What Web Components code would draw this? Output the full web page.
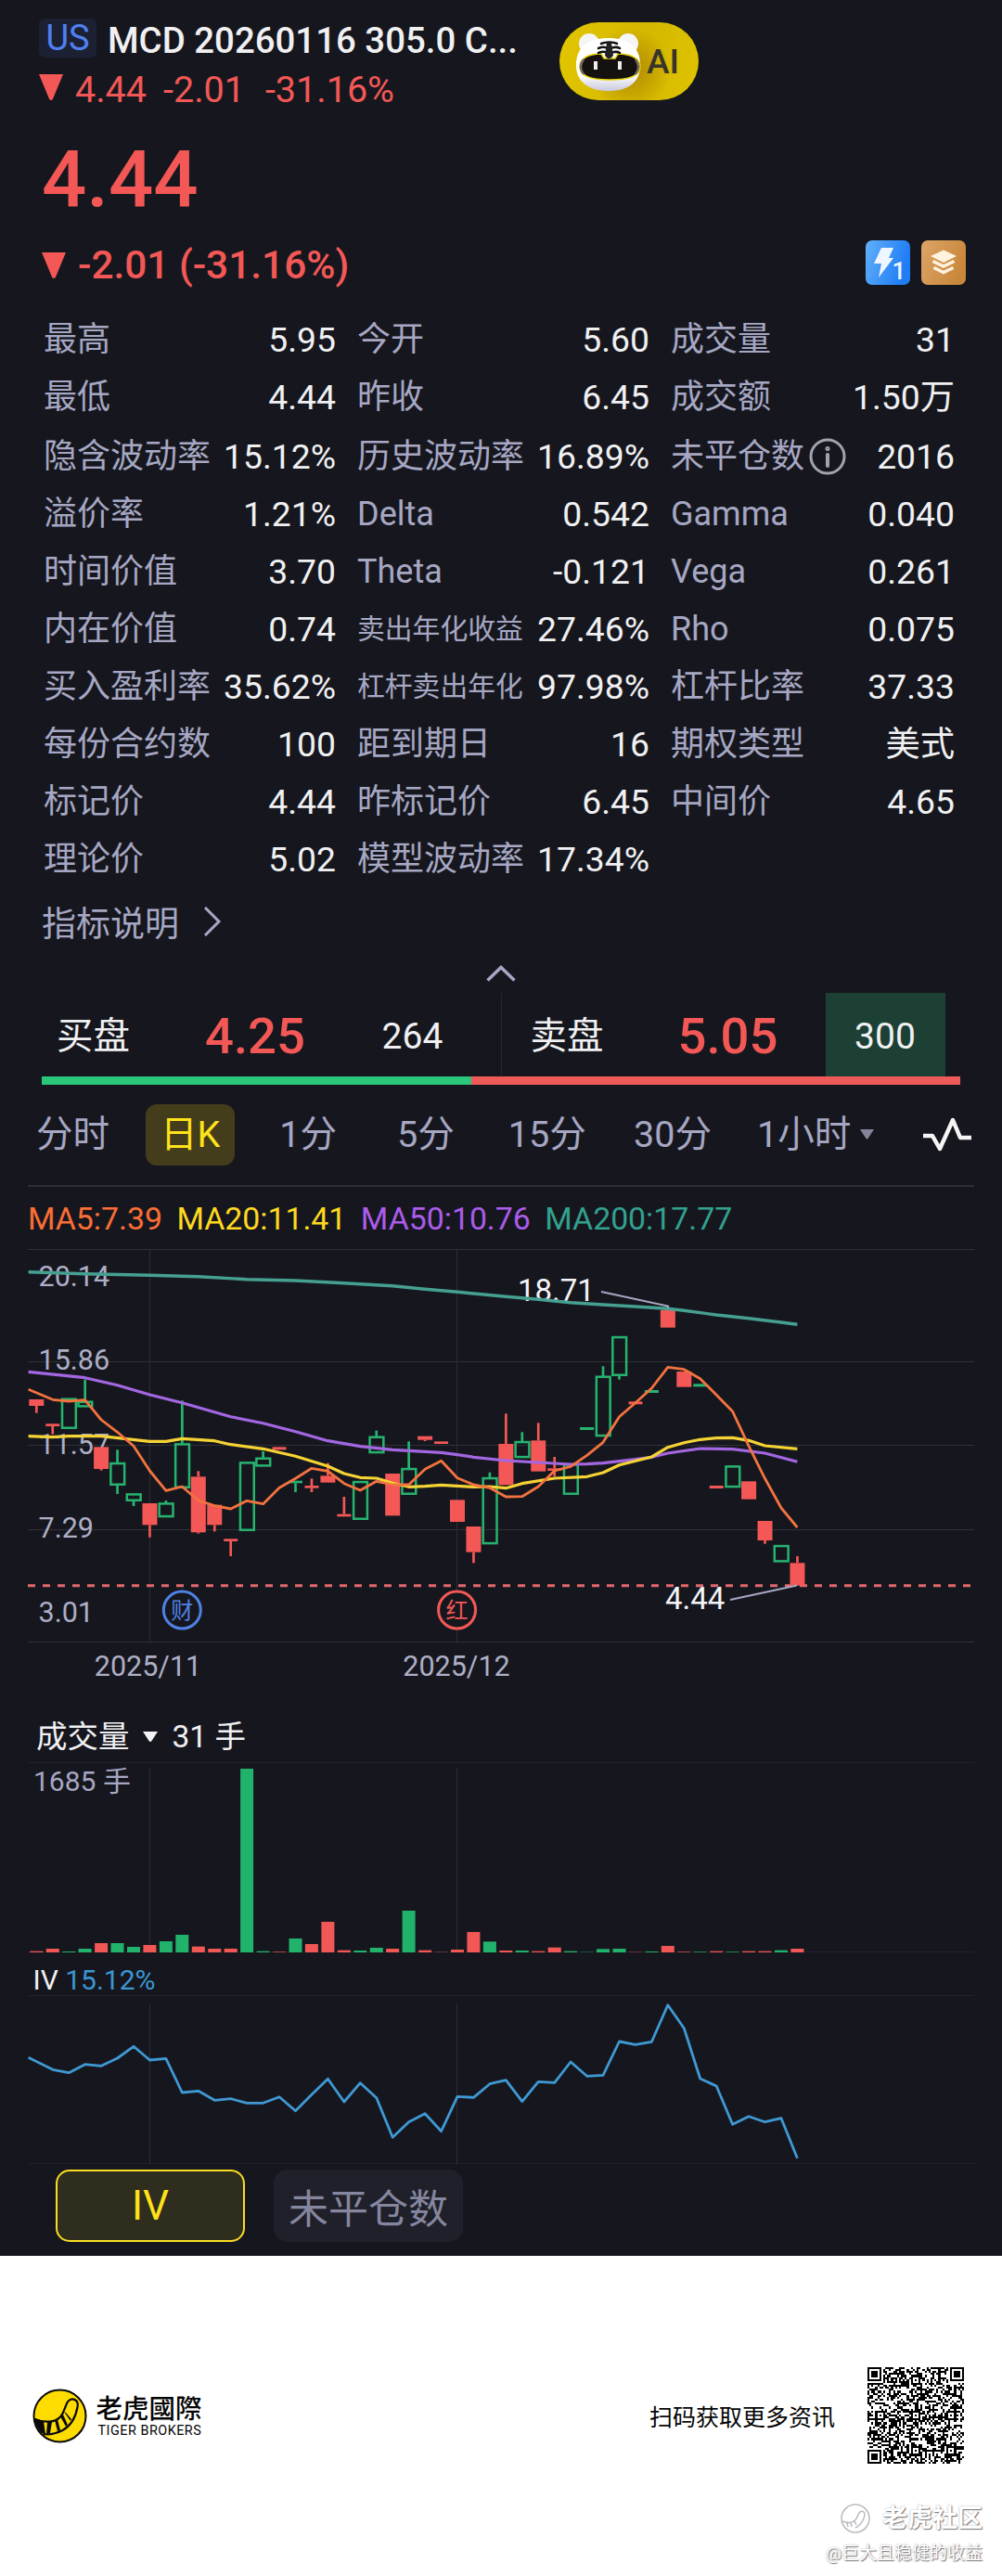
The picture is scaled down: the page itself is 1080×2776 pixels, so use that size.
<!DOCTYPE html>
<html lang="zh-CN">
<head>
<meta charset="utf-8">
<title>MCD 20260116 305.0 CALL</title>
<style>
  html, body { margin: 0; padding: 0; background: #fff; }
  body {
    width: 1080px;
    font-family: Roboto, "Noto Sans CJK SC", sans-serif;
    --muted: #a6a7c3;
    --red: #f35856;
    --yellow: #ffe21a;
  }
  main { display: flex; flex-direction: column; height: 2431px; background: #16171e; color: #f0f0f2; }
</style>
</head>
<body>
<main>
  <quote-header>
    <span slot="market">US</span>
    <span slot="title">MCD 20260116 305.0 C...</span>
  </quote-header>
  <quote-price></quote-price>
  <stat-grid></stat-grid>
  <order-depth></order-depth>
  <period-tabs></period-tabs>
  <kline-chart></kline-chart>
  <volume-chart></volume-chart>
  <iv-chart></iv-chart>
  <indicator-switch>
    <indicator-button active>IV</indicator-button>
    <indicator-button>未平仓数</indicator-button>
  </indicator-switch>
</main>
<brand-footer></brand-footer>

<script>
const RED = '#f35856'
const GREEN = '#26b36f'

class BaseElement extends HTMLElement {
  connectedCallback() {
    if (this.shadowRoot) return
    this.attachShadow({mode: 'open'})
    this.shadowRoot.innerHTML = this.render()
  }
}

class QuoteHeader extends BaseElement {
  render() {
    return `
      <style>
      :host { display: flex; height: 130px; box-sizing: border-box; padding: 20px 0 0 42px; }
      .info { width: 561px; }
      .top { display: flex; height: 42px; line-height: 48px; font-size: 38.4px; font-weight: 500; white-space: nowrap; }
      .market {
        width: 62px; height: 42px; line-height: 42px; margin-right: 12px; border-radius: 6px;
        background: #1b2133; color: #4f80f2; font-size: 38px; font-weight: 400; text-align: center;
      }
      .change { display: flex; align-items: center; height: 48px; margin-top: 11px; color: var(--red); font-size: 39.5px; line-height: 48px; white-space: pre; }
      .change svg { margin-right: 13px; }
      .change span { margin-right: 18px; }
      .ai {
        display: flex; align-items: center; width: 150px; height: 84px; margin-top: 4px; border-radius: 42px;
        background: radial-gradient(circle at 76px 50px, #b89300 10px, rgba(190, 155, 0, 0) 44px), linear-gradient(100deg, #e2c600 0%, #d4b700 60%, #dfc400 100%);
      }
      .ai b { margin-left: 6px; font-size: 37px; font-weight: 500; color: #37342a; }
      </style>
      <div class="info">
        <div class="top"><div class="market"><slot name="market"></slot></div><slot name="title"></slot></div>
        <div class="change">
          <svg width="26" height="28" style="margin-top:-7px"><path d="M0 0h26L15 26.500q-2 3-4 0z" fill="${RED}"/></svg><span>4.44</span><span style="margin-right:22px">-2.01</span><span>-31.16%</span>
        </div>
      </div>
      <div class="ai">
        <svg width="88" height="84" viewBox="0 0 88 84">
          <defs>
            <linearGradient id="face" x1="0" y1="0" x2="0" y2="1">
              <stop offset=".7" stop-color="#fff"/><stop offset="1" stop-color="#c9c9de"/>
            </linearGradient>
          </defs>
          <circle cx="32" cy="23" r="11" fill="#f5f5f5"/><circle cx="74" cy="23" r="11" fill="#f5f5f5"/>
          <path d="M53 17c21 0 33 9 34 27 1 20-12 30-34 30S17 64 18 44c1-18 13-27 35-27z" fill="url(#face)"/>
          <path d="M22 48c0-9 9-14 23-14l3 5h12l3-5c14 0 24 5 24 14 0 10-14 14-33 14s-32-4-32-14z" fill="#15110f" stroke="#e8d400" stroke-width="1.500"/>
          <path d="M26 40c-4 5-4 11 0 16M82 40c4 5 4 11 0 16" fill="none" stroke="#766b6b" stroke-width="2.500"/>
          <path d="M45 23c5-2 13-2 17 0M42 28c5-2 9-1 11 1 3-2 9-3 12-1M42 33c5-2 9-1 11 1 3-2 9-3 12-1" fill="none" stroke="#111" stroke-width="2.600" stroke-linecap="round"/>
          <path d="M51 22h5l2 14-3 3h-3l-3-3z" fill="#222"/>
          <path d="M37 42h4v9h-4zM63 42h4v9h-4z" fill="#eee"/>
        </svg>
        <b>AI</b>
      </div>
    `
  }
}

class QuotePrice extends BaseElement {
  render() {
    return `
      <style>
      :host { display: block; height: 204px; padding: 0 39px 0 45px; color: var(--red); font-weight: 500; }
      .price { height: 126px; line-height: 128px; font-size: 85px; }
      .row { display: flex; align-items: center; height: 60px; }
      .change { flex: 1; font-size: 42.4px; line-height: 60px; margin-left: 13px; }
      .icons { display: flex; gap: 12px; margin-top: -6px; }
      text { font: 500 26px Roboto, sans-serif; }
      </style>
      <div class="price">4.44</div>
      <div class="row">
        <svg width="26" height="28"><path d="M0 0h26L15 26.500q-2 3-4 0z" fill="${RED}"/></svg>
        <span class="change">-2.01 (-31.16%)</span>
        <div class="icons">
          <svg width="48" height="48">
            <defs><linearGradient id="blue" x2="1" y2=".3"><stop stop-color="#62b0fa"/><stop offset="1" stop-color="#1f7df5"/></linearGradient></defs>
            <rect width="48" height="48" rx="7" fill="url(#blue)"/>
            <path d="M17 8h13l-5 11h5L14 40l3-15H9z" fill="#eef6ff"/>
            <text x="28.500" y="42" fill="#eef6ff">1</text>
          </svg>
          <svg width="48" height="48">
            <defs><linearGradient id="gold" x2="1" y2=".4"><stop stop-color="#dea468"/><stop offset="1" stop-color="#c8883c"/></linearGradient></defs>
            <rect width="48" height="48" rx="7" fill="url(#gold)"/>
            <path d="M24 10.500L38 17l-14 7-14-7z" fill="#fff3df"/>
            <path d="M12.500 22.500L24 28l11.500-5.500M13.500 29.500L24 34.500l10.500-5" fill="none" stroke="#fff3df" stroke-width="3.500"/>
          </svg>
        </div>
      </div>
    `
  }
}

const STATS = [
  ['最高', '5.95'], ['今开', '5.60'], ['成交量', '31'],
  ['最低', '4.44'], ['昨收', '6.45'], ['成交额', '1.50万'],
  ['隐含波动率', '15.12%'], ['历史波动率', '16.89%'], ['未平仓数', '2016'],
  ['溢价率', '1.21%'], ['Delta', '0.542'], ['Gamma', '0.040'],
  ['时间价值', '3.70'], ['Theta', '-0.121'], ['Vega', '0.261'],
  ['内在价值', '0.74'], ['卖出年化收益', '27.46%'], ['Rho', '0.075'],
  ['买入盈利率', '35.62%'], ['杠杆卖出年化', '97.98%'], ['杠杆比率', '37.33'],
  ['每份合约数', '100'], ['距到期日', '16'], ['期权类型', '美式'],
  ['标记价', '4.44'], ['昨标记价', '6.45'], ['中间价', '4.65'],
  ['理论价', '5.02'], ['模型波动率', '17.34%']
]

class StatItem extends BaseElement {
  render() {
    const label = this.getAttribute('label')
    const info = this.hasAttribute('info')
      ? `<svg width="40" height="40" viewBox="0 0 40 40" fill="none" stroke="#a3a3ae" stroke-width="3"><circle cx="20" cy="20" r="18"/><path d="M20 18v12" stroke-width="4" stroke-linecap="round"/><circle cx="20" cy="11.500" r="1"/></svg>`
      : ''
    return `
      <style>
      :host { display: flex; align-items: center; line-height: 62px; white-space: nowrap; }
      .label { color: var(--muted); font-size: ${label.length > 5 ? 29.8 : 36}px; }
      svg { margin-left: 5px; }
      .value { margin-left: auto; font-size: 37.3px; }
      </style>
      <span class="label">${label}</span>${info}
      <span class="value"><slot></slot></span>
    `
  }
}

class StatGrid extends BaseElement {
  render() {
    return `
      <style>
      :host { display: block; height: 692px; }
      .grid { display: grid; grid-template-columns: 315px 315px 306px; grid-template-rows: 62px 62px 64px repeat(7, 62px); column-gap: 23px; padding: 1px 0 0 47px; }
      stat-item:nth-child(n+7):nth-child(-n+9) { padding-top: 2px; }
      .more { display: flex; align-items: center; height: 72px; padding-left: 45px; color: var(--muted); font-size: 37px; }
      .more svg { margin-left: 26px; }
      </style>
      <div class="grid">
        ${STATS.map(([label, value]) => `<stat-item label="${label}" ${label === '未平仓数' ? 'info' : ''}>${value}</stat-item>`).join('')}
      </div>
      <div class="more">指标说明<svg width="20" height="32" viewBox="0 0 20 32" fill="none" stroke="#a6a7c3" stroke-width="3"><path d="M2 1l15 15L2 31"/></svg></div>
    `
  }
}

class OrderDepth extends BaseElement {
  render() {
    return `
      <style>
      :host { display: block; height: 143px; padding: 0 45px; }
      .up { display: block; margin: 0 auto; padding-top: 14px; }
      .book { display: flex; height: 90px; margin-top: 12px; line-height: 94px; }
      .side { display: flex; flex: 1; box-sizing: border-box; }
      .side + .side { border-left: 1px solid #26272d; }
      .side span { flex-shrink: 0; }
      .name { width: 160px; padding-left: 16px; font-size: 39.5px; }
      .price { width: 175px; color: var(--red); font-size: 54.500px; font-weight: 500; line-height: 93px; }
      .size { width: 129px; margin-left: -16px; text-align: center; font-size: 39px; }
      .ask .name { width: 159px; padding-left: 31px; }
      .ask .size { background: #1c4034; }
      .bar { display: flex; height: 9px; }
      .bar i:first-child { width: 463px; background: #2ac67c; }
      .bar i:last-child { flex: 1; background: #ee5a58; }
      </style>
      <svg class="up" width="34" height="18" viewBox="0 0 34 18" fill="none" stroke="#a6a7c3" stroke-width="3.500"><path d="M2.500 16.500L17 2.500l14.500 14"/></svg>
      <div class="book">
        <div class="side"><span class="name">买盘</span><span class="price">4.25</span><span class="size">264</span></div>
        <div class="side ask"><span class="name">卖盘</span><span class="price">5.05</span><span class="size">300</span></div>
      </div>
      <div class="bar"><i></i><i></i></div>
    `
  }
}

class PeriodTabs extends BaseElement {
  render() {
    return `
      <style>
      :host { display: block; height: 110px; padding: 0 30px; }
      nav { display: flex; align-items: center; height: 110px; padding-left: 9px; box-sizing: border-box; border-bottom: 2px solid #2e2f34; color: var(--muted); font-size: 39.6px; line-height: 66px; }
      span { flex-shrink: 0; white-space: nowrap; }
      svg { flex-shrink: 0; }
      .on { width: 96px; border-radius: 12px; background: #443d1b; color: var(--yellow); text-align: center; }
      </style>
      <nav>
        <span style="margin-right:39px">分时</span>
        <span class="on" style="margin-right:48px">日K</span>
        <span style="margin-right:65px">1分</span>
        <span style="margin-right:58px">5分</span>
        <span style="margin-right:51px">15分</span>
        <span style="margin-right:49px">30分</span>
        <span style="margin-right:9px">1小时</span>
        <svg width="17" height="12"><path d="M1 0h15l-6.500 10q-1 1-2 0z" fill="#84859d"/></svg>
        <svg width="54" height="40" viewBox="0 0 54 40" style="margin-left:51px" fill="none" stroke="#f5f5f5" stroke-width="4.500" stroke-linejoin="round"><path d="M1 21h10l8 14L33 4l8 19h12"/></svg>
      </nav>
    `
  }
}

const STEP = 17.45
const FIRST_X = 39.3
const xAt = i => FIRST_X + STEP * i
const monthLines = (top, bottom) =>
  [161.5, 492.5].map(x => `<path d="M${x} ${top}V${bottom}" stroke="#2d2e33"/>`).join('')

// [index, y] pairs, y in thirds of a pixel
function polyline(points, color, width) {
  const d = points.map(([i, y]) => `${xAt(i).toFixed(1)},${(y / 3).toFixed(1)}`).join(' ')
  return `<polyline points="${d}" fill="none" stroke="${color}" stroke-width="${width}" stroke-linejoin="round"/>`
}

// direction, body top, body bottom, high, low
const CANDLES = [
  ['r', 534, 555, 534, 578], ['r', 613, 621, 615, 647], ['g', 532, 628], ['g', 541, 558, 470, 558],
  ['r', 688, 759, 688, 764], ['g', 740, 811, 697, 840], ['g', 840, 862, 840, 879], ['r', 870, 940, 870, 980],
  ['g', 870, 914, 861, 914], ['g', 678, 820, 538, 820], ['r', 784, 964, 766, 968], ['r', 875, 940, 875, 961],
  ['r', 985, 993, 986, 1041], ['g', 738, 958], ['g', 724, 750, 702, 750], ['r', 688, 697],
  ['g', 797, 805, 797, 834], ['r', 813, 821, 790, 834], ['r', 781, 803, 740, 803], ['r', 905, 913, 849, 912],
  ['g', 800, 922], ['g', 655, 707, 635, 707], ['r', 774, 910], ['g', 758, 841, 670, 841],
  ['r', 653, 665, 653, 669], ['r', 670, 678], ['r', 859, 930], ['r', 945, 1028, 945, 1063],
  ['g', 788, 1001, 770, 1001], ['r', 678, 811, 580, 811], ['g', 671, 722, 640, 722], ['r', 667, 767, 610, 767],
  ['r', 757, 765, 720, 783], ['g', 744, 841], ['g', 624, 633], ['g', 460, 653, 427, 653],
  ['g', 332, 457, 332, 470], ['r', 541, 550], ['g', 504, 513], ['r', 245, 302, 233, 302],
  ['r', 444, 494], ['g', 484, 493], ['r', 813, 822], ['g', 750, 818],
  ['r', 799, 857], ['r', 927, 990, 927, 1001], ['g', 1007, 1059], ['r', 1063, 1136, 1041, 1136]
]

const MA5 = [502, 535, 540, 536, 600, 640, 685, 765, 829, 816, 861, 878, 888, 862, 872, 820, 790, 757, 766, 806, 828, 799, 810, 810, 760, 733, 788, 810, 820, 849, 848, 816, 765, 751, 715, 673, 590, 545, 498, 430, 437, 467, 520, 573, 685, 790, 885, 948]
  .map((y, i) => [i || -.5, y])
const MA20 = [[-.5, 653], [1, 656], [2, 653], [4, 653], [7, 670], [8, 670], [9, 661], [11, 668], [12, 680], [14, 694], [16, 718], [18, 750], [19, 774], [20, 787], [21, 789], [22, 805], [23, 817], [24, 815], [25, 811], [27, 817], [28, 816], [29, 821], [30, 806], [32, 789], [34, 784], [35, 771], [36, 746], [38, 720], [39, 689], [40, 674], [41, 664], [42, 659], [43, 658], [44, 667], [45, 684], [47, 694]]
const MA50 = [[-.5, 445], [3, 464], [5, 488], [7, 519], [9, 545], [12, 590], [14, 611], [16, 638], [18, 668], [20, 686], [22, 697], [25, 706], [26, 713], [27, 721], [29, 732], [32, 741], [33, 744], [34, 743], [35, 740], [37, 728], [38, 721], [39, 708], [41, 693], [43, 695], [45, 708], [47, 736]]
const MA200 = [[-.5, 122], [3, 128], [7, 133], [10, 137], [13, 146], [16, 150], [19, 158], [22, 167], [24, 178], [26, 187], [29, 202], [31, 211], [33, 221], [35, 228], [37, 234], [39, 241], [40, 247], [42, 261], [44, 272], [46, 285], [47, 292]]

class KlineChart extends BaseElement {
  candle([dir, top, bottom, high = top, low = bottom], i) {
    const color = dir === 'r' ? RED : GREEN
    const x = xAt(i)
    const wick = (a, b) => b > a ? `<path d="M${x} ${a / 3}V${b / 3}" stroke="${color}" stroke-width="2.700"/>` : ''
    const h = (bottom - top) / 3
    const thin = h < 4
    const body = dir === 'r' || thin
      ? `<rect x="${x - (thin ? 7.5 : 8)}" y="${top / 3}" width="${thin ? 15 : 16}" height="${h}" fill="${color}"/>`
      : `<rect x="${x - 7.2}" y="${top / 3 + 0.4}" width="14.800" height="${h - 1}" fill="none" stroke="${color}" stroke-width="2.500"/>`
    return wick(high, top) + wick(bottom, low) + body
  }

  event(x, text, color) {
    return `<circle cx="${x}" cy="405" r="20" fill="#16171e" stroke="${color}" stroke-width="3"/>
      <text x="${x}" y="413.500" fill="${color}" font-size="24" text-anchor="middle">${text}</text>`
  }

  render() {
    const labels = [['20.14', 56], ['15.86', 145.7], ['11.57', 237], ['7.29', 326.7], ['3.01', 417.7]]
    return `
      <style>
      :host { display: block; height: 561px; }
      .ma { display: flex; gap: 15.500px; height: 51px; padding: 18px 30px 0; align-items: center; line-height: 51px; box-sizing: border-box; font-size: 33.800px; white-space: nowrap; }
      svg { display: block; }
      text { font-family: Roboto, "Noto Sans CJK SC", sans-serif; }
      </style>
      <div class="ma">
        <span style="color:#fb6e35">MA5:7.39</span><span style="color:#ffd91e">MA20:11.41</span><span style="color:#ab5ceb">MA50:10.76</span><span style="color:#32a18f">MA200:17.77</span>
      </div>
      <svg width="1080" height="500" viewBox="0 0 1080 500">
        ${[16.5, 137.5, 227.5, 318.5, 439.5].map(y => `<path d="M30 ${y}H1050" stroke="#303137"/>`).join('')}
        ${monthLines(17, 439)}
        <g fill="#aeaec6" font-size="30.500">${labels.map(([t, y]) => `<text x="41.500" y="${y}">${t}</text>`).join('')}
          <text x="159.500" y="476" text-anchor="middle">2025/11</text><text x="492" y="476" text-anchor="middle">2025/12</text></g>
        <g fill="#f4f4f6" font-size="33"><text x="558" y="72">18.71</text><text x="717" y="404">4.44</text></g>
        <path d="M30 378.700H1047" stroke="#e2686e" stroke-width="3" stroke-dasharray="8 8"/>
        ${CANDLES.map(this.candle).join('')}
        ${polyline(MA200, '#45a092', 3.4)}
        ${polyline(MA50, '#a367e2', 3.2)}
        ${polyline(MA20, '#f5d334', 3.2)}
        ${polyline(MA5, '#f3733f', 2.8)}
        <path d="M648 62l72 15.500v2M787 394l72-15.500" fill="none" stroke="#a6a7c3" stroke-width="2"/>
        ${this.event(196.3, '财', '#4f81e5')}
        ${this.event(492.6, '红', '#f35856')}
      </svg>
    `
  }
}

// bar tops in thirds of a pixel, the base is at 792
const VOLUME = 'r788 r780 g789 g780 r762 g762 g774 r768 g756 g735 r773 r780 r780 g198 g788 r790 g747 r765 r693 r785 g786 g777 r780 g657 r785 r791 r783 r726 g757 r786 g786 r788 r776 g788 g791 g781 g780 r791 g789 r771 r790 g790 r788 g790 r788 r788 g785 r780'.split(' ')

class VolumeChart extends BaseElement {
  render() {
    const bars = VOLUME.map((bar, i) => {
      const top = Number(bar.slice(1)) / 3
      return `<rect x="${(xAt(i) - 7).toFixed(1)}" y="${top}" width="14" height="${264 - top}" fill="${bar[0] === 'r' ? '#f05755' : '#21b26b'}"/>`
    })
    return `
      <style>
      :host { display: block; height: 276px; }
      .title { display: flex; align-items: center; height: 64px; padding-left: 39px; font-size: 33.500px; line-height: 64px; }
      .title svg { margin: 0 16px 0 14px; }
      .plot { display: block; margin-top: -64px; }
      text { font-family: Roboto, "Noto Sans CJK SC", sans-serif; }
      </style>
      <div class="title"><span>成交量</span><svg width="16" height="12"><path d="M0 0h16L9.500 10q-1.500 2-3 0z" fill="#f4f4f6"/></svg><span>31 手</span></div>
      <svg class="plot" width="1080" height="270" viewBox="0 0 1080 270">
        <path d="M30 59.500H1050M30 263.500H1050" stroke="#212229"/>
        ${monthLines(66, 263)}
        <text x="36" y="90" font-size="30" fill="#a6a7c3">1685 手</text>
        ${bars.join('')}
      </svg>
    `
  }
}

const IV = [262, 301, 311, 284, 289, 264, 226, 270, 265, 375, 370, 400, 395, 409, 409, 389, 434, 382, 331, 405, 344, 392, 520, 470, 443, 500, 388, 391, 347, 335, 404, 340, 343, 276, 322, 319, 210, 220, 211, 92, 167, 330, 354, 478, 452, 470, 458, 587]
  .map((y, i) => [i || -.5, y])

class IvChart extends BaseElement {
  render() {
    return `
      <style>
      :host { display: block; height: 222px; }
      .title { height: 14px; padding-left: 35.500px; line-height: 36px; font-size: 30px; }
      .title span { color: #3b97d3; }
      svg { display: block; }
      </style>
      <div class="title">IV <span>15.12%</span></div>
      <svg width="1080" height="208" viewBox="0 0 1080 208">
        <path d="M30 20.500H1050M30 201.500H1050" stroke="#212229"/>
        ${monthLines(30, 202)}
        ${polyline(IV, '#3f99d4', 2.8)}
      </svg>
    `
  }
}

class IndicatorSwitch extends BaseElement {
  render() {
    return `
      <style>
      :host { display: flex; gap: 31px; height: 79px; padding-left: 60px; }
      </style>
      <slot></slot>
    `
  }
}

class IndicatorButton extends BaseElement {
  render() {
    return `
      <style>
      :host { display: flex; box-sizing: border-box; width: 204px; height: 78px; align-items: center; justify-content: center; border-radius: 15px; background: #1f2029; color: #85869f; font-size: 43px; }
      :host([active]) { border: 2px solid #f8de22; background: #2f2d1d; color: #ffe21a; font-size: 44px; }
      </style>
      <slot></slot>
    `
  }
}

class QrCode extends BaseElement {
  render() {
    const n = 49
    let seed = 20260116
    const random = () => (seed = (seed * 1103515245 + 12345) % 2147483648) / 2147483648
    const cells = Array.from({length: n}, () => Array.from({length: n}, () => random() < .5))
    // rings[k] tells if the square ring at distance k from the centre is dark
    const stamp = (cx, cy, rings) => {
      const r = rings.length - 1
      for (let y = -r; y <= r; y++) {
        for (let x = -r; x <= r; x++) {
          if (cells[cy + y]?.[cx + x] === undefined) continue
          cells[cy + y][cx + x] = rings[Math.max(Math.abs(x), Math.abs(y))] === 1
        }
      }
    }
    for (let i = 8; i < n - 8; i++) cells[6][i] = cells[i][6] = i % 2 === 0
    for (const [x, y] of [[3, 3], [45, 3], [3, 45]]) stamp(x, y, [1, 1, 0, 1, 0])
    for (const [x, y] of [[24, 6], [6, 24], [24, 24], [42, 24], [24, 42], [42, 42]]) stamp(x, y, [1, 0, 1])
    let d = ''
    cells.forEach((row, y) => row.forEach((on, x) => { if (on) d += `M${x} ${y}h1v1h-1z` }))
    return `
      <style>:host { display: block; } svg { display: block; }</style>
      <svg width="104" height="104" viewBox="0 0 49 49" shape-rendering="crispEdges"><path d="${d}" fill="#000"/></svg>
    `
  }
}

class BrandFooter extends BaseElement {
  render() {
    return `
      <style>
      :host { display: block; height: 345px; background: #fff; color: #050505; }
      .bar { display: flex; align-items: center; height: 344px; padding: 0 41px 0 35px; }
      .brand { margin-left: 9.500px; width: 140px; }
      .cn { font-family: "Noto Sans CJK TC", sans-serif; font-size: 28.500px; font-weight: 500; line-height: 34px; }
      .en { padding-left: 2px; font-size: 14.400px; line-height: 18px; white-space: nowrap; letter-spacing: .5px; }
      .tip { margin-left: auto; margin-right: 35px; font-size: 25px; }
      .mark { position: absolute; right: 21px; top: 2691px; text-align: right; color: #fff; text-shadow: 1px 1px 1px #77777e, 0 0 2px #aaa; }
      .mark div { display: flex; align-items: center; justify-content: flex-end; gap: 12px; font-size: 27px; line-height: 46px; font-weight: 700; }
      .mark p { margin: 2px 0 0; font-size: 19px; line-height: 26px; }
      </style>
      <div class="bar">
        <svg width="59" height="59" viewBox="0 0 59 59">
          <circle cx="29.500" cy="29.500" r="28" fill="#ffdc00" stroke="#0a0a0a" stroke-width="2"/>
          <path d="M2.500 33c10 4 22 4 28-3 4-5 4-9 7-15 4-7 13-3 11 5-2 11-7 20-16 25-8 4-15 5-21 4" fill="none" stroke="#0a0a0a" stroke-width="2.200"/>
          <path d="M2 32l10 3 2 14-4-1C5 43 3 38 2 32zM16 36h5l-2 12-4 1zM24 34l3-1 3 12-3 1zM30 30l3-2 5 11-2 2zM34 25l2 1 6 7-1 2z" fill="#0a0a0a"/>
        </svg>
        <div class="brand"><div class="cn">老虎國際</div><div class="en">TIGER BROKERS</div></div>
        <span class="tip">扫码获取更多资讯</span>
        <qr-code></qr-code>
      </div>
      <div class="mark">
        <div>
          <svg width="34" height="34" viewBox="0 0 34 34" fill="none" stroke="#b9b9c0" stroke-width="1.500"><circle cx="17" cy="17" r="15"/><path d="M3 20c8 3 14 1 16-5 2-5 4-7 7-5 3 3-2 14-9 17M8 22l1 4M12 22l1 4M16 20l2 4"/></svg>
          老虎社区
        </div>
        <p>@巨大且稳健的收益</p>
      </div>
    `
  }
}

customElements.define('quote-header', QuoteHeader)
customElements.define('quote-price', QuotePrice)
customElements.define('stat-item', StatItem)
customElements.define('stat-grid', StatGrid)
customElements.define('order-depth', OrderDepth)
customElements.define('period-tabs', PeriodTabs)
customElements.define('kline-chart', KlineChart)
customElements.define('volume-chart', VolumeChart)
customElements.define('iv-chart', IvChart)
customElements.define('indicator-switch', IndicatorSwitch)
customElements.define('indicator-button', IndicatorButton)
customElements.define('qr-code', QrCode)
customElements.define('brand-footer', BrandFooter)
</script>
</body>
</html>
